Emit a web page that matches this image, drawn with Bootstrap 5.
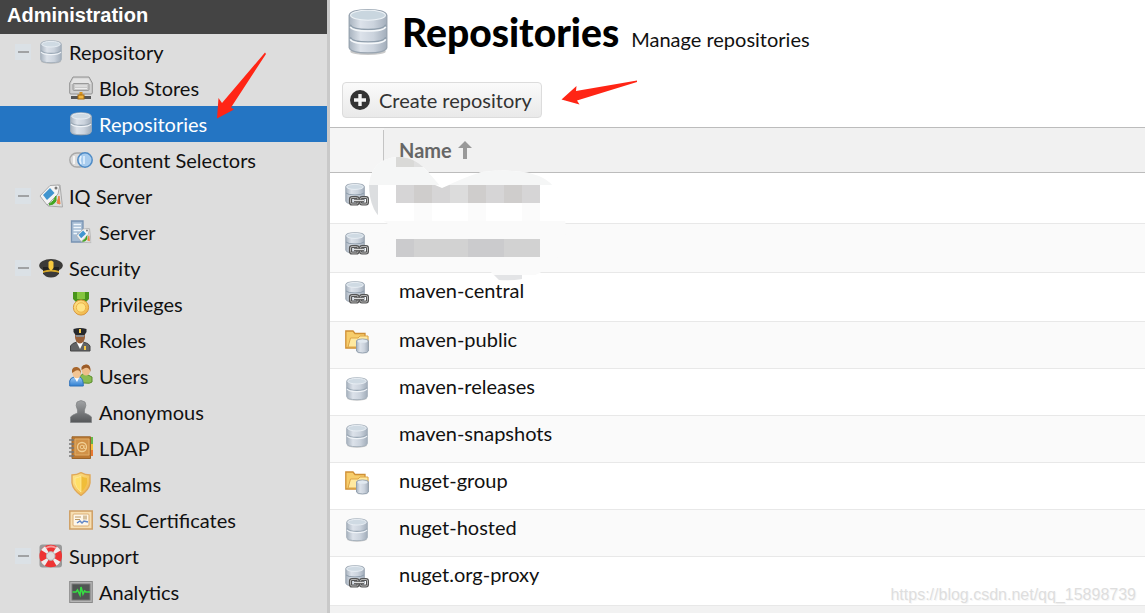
<!DOCTYPE html>
<html lang="en">
<head>
<meta charset="utf-8">
<meta name="viewport" content="width=device-width, initial-scale=1">
<title>Repositories</title>
<link href="https://cdn.jsdelivr.net/npm/bootstrap@5.3.0/dist/css/bootstrap.min.css" rel="stylesheet">
<style>
body { font-family: Lato, sans-serif; font-size: 20px; line-height: 24px; color: #111; background: #f2f2f2; }
.arial { font-family: "Liberation Sans", Arial, sans-serif; }
.side { width: 330px; background: #ddd; border-right: 3px solid #c9c9c9; }
.side-title { background: #444; color: #fff; font-size: 20px; line-height: 24px; padding: 3px 7px 7px; margin: 0; }
.tree a { height: 36px; gap: 6px; color: #111; text-decoration: none; padding-left: 39px; }
.tree a.leaf { padding-left: 69px; }
.tree a.group { padding-left: 15px; }
.tree a.current { background: #2475c3; color: #fff; }
.tree a, .create { line-height: 22px; padding-bottom: 1px; }
.fold { width: 16px; height: 16px; margin-right: 2px; background: #dbe1e6; }
.fold::before { content: ""; width: 11px; height: 2px; background: #a0a2a4; }
.ico { width: 24px; height: 24px; flex: none; display: block; }
.head { padding: 8px 18px 0; height: 82px; gap: 14px; }
.head h1 { font-size: 39px; line-height: 48px; font-weight: 900; color: #000; }
.titles { gap: 12px; }
.bar { padding: 0 12px 9px; }
.create { height: 36px; padding: 0 9px 1px 7px; gap: 9px; font-size: 20px; color: #333; border: 1px solid #dcdcdc; border-radius: 4px; background: linear-gradient(#fafafa, #e9e9e9); }
.create:hover { color: #000; }
.repos { width: 100%; table-layout: fixed; border-collapse: separate; border-spacing: 0; }
.repos th { height: 46px; padding: 0 15px; background: #f1f1f1; border: solid #bcbcbc; border-width: 1px 0; color: #666; }
.repos th:first-child { width: 54px; background: #f5f5f5; }
.tick { height: 32px; gap: 6px; border-left: 1px solid #c4c4c4; margin: 0 0 8px -16px; padding: 8px 0 0 15px; }
.repos td { height: 47px; padding: 8px 15px 0; vertical-align: top; border-bottom: 1px solid #e8e8e8; background: #fff; }
.repos td + td { padding-top: 5px; }
.repos tr.proxy td { height: 49px; }
.repos tr.proxy:first-child td { height: 51px; padding-top: 10px; }
.repos tbody tr:nth-child(even) td { background: #fafafa; }
.smudge { left: 39px; top: 29px; }
.arrow-side { left: 214px; top: 50px; }
.arrow-main { left: 560px; top: 78px; }
.watermark { right: 9px; bottom: 8px; font-size: 16px; line-height: 20px; color: #dedede; text-shadow: 1px 1px #f6f6f6; }
</style>
</head>
<body>
<svg class="position-absolute" width="0" height="0" aria-hidden="true">
  <defs>
    <linearGradient id="steel" x1="0" x2="1"><stop offset="0" stop-color="#a8b3bf"/><stop offset=".3" stop-color="#dce2ea"/><stop offset=".65" stop-color="#cbd3dd"/><stop offset="1" stop-color="#a3aebb"/></linearGradient>
    <linearGradient id="gold" x1="0" x2="1" y2="1"><stop offset="0" stop-color="#ffe98f"/><stop offset="1" stop-color="#efb040"/></linearGradient>
    <linearGradient id="blue" y2="1" x2="0"><stop offset="0" stop-color="#9fcbf5"/><stop offset="1" stop-color="#2f7fd2"/></linearGradient>
    <linearGradient id="gray" y2="1" x2="0"><stop offset="0" stop-color="#a2a4a6"/><stop offset="1" stop-color="#555759"/></linearGradient>
  </defs>
  <symbol id="db" viewBox="0 0 24 24">
    <ellipse cx="12" cy="21.500" rx="10" ry="2.200" fill="#777" opacity=".35"/>
    <path d="M1.700 4.300Q2 .8 12 .8T22.300 4.300V19.500Q22 22.700 12 22.700T1.700 19.500Z" fill="url(#steel)" stroke="#a6b1bc"/>
    <ellipse cx="12" cy="4.200" rx="9.300" ry="2.800" fill="#cfdae3" stroke="#eef3f7" stroke-width=".8"/>
    <path d="M2 10.500Q4 13.300 12 13.300T22 10.500" fill="none" stroke="#9aa8b5" stroke-width="1.200"/>
    <path d="M2 12Q4 14.600 12 14.600T22 12" fill="none" stroke="#f0f4f8" stroke-width="1.200"/>
  </symbol>
  <symbol id="db-big" viewBox="0 0 38 46">
    <ellipse cx="19" cy="42" rx="17" ry="3" fill="#777" opacity=".4"/>
    <path d="M1 7Q2 1.500 19 1.500T37 7V38Q36 43 19 43T1 38Z" fill="url(#steel)" stroke="#98a4b0" stroke-width="1.300"/>
    <ellipse cx="19" cy="7" rx="16.700" ry="4.800" fill="#c9d6df" stroke="#edf2f6"/>
    <path d="M2 16Q4 20.500 19 20.500T36 16M2 28Q4 32.500 19 32.500T36 28" fill="none" stroke="#8f9eac" stroke-width="1.300"/>
    <path d="M2 18Q4 22 19 22T36 18M2 30Q4 34 19 34T36 30" fill="none" stroke="#f5f8fa" stroke-width="1.500"/>
  </symbol>
  <symbol id="proxy" viewBox="0 0 24 24">
    <path d="M.8 3.500Q1 .8 10 .8T19.300 3.500V18Q19 21 10 21T.8 18Z" fill="url(#steel)" stroke="#9aa6b2"/>
    <ellipse cx="10" cy="3.900" rx="8.400" ry="2.500" fill="#cfdae3" stroke="#eef3f7" stroke-width=".8"/>
    <path d="M1 10Q3 12 10 12T19 10" fill="none" stroke="#8d9cab"/>
    <g fill="none"><rect x="5.500" y="14.500" width="7.500" height="6.500" rx="1.500" stroke="#555" stroke-width="3.200"/><rect x="15.500" y="14.500" width="7" height="6.500" rx="1.500" stroke="#555" stroke-width="3"/><rect x="5.500" y="14.500" width="7.500" height="6.500" rx="1.500" stroke="#b5b5b5"/><rect x="15.500" y="14.500" width="7" height="6.500" rx="1.500" stroke="#b5b5b5"/><path d="M9 17.700H19" stroke="#555" stroke-width="3"/><path d="M9 17.500H19" stroke="#ddd" stroke-width="1.300"/></g>
  </symbol>
  <symbol id="folder" viewBox="0 0 24 24">
    <path d="M.8 1H8L10 3.500H20V7H22.500V17L20 18H.8Z" fill="#f7cd6b" stroke="#cf8f35" stroke-width="1.300"/>
    <path d="M3 17L5.500 8H13L15 6H23V17Z" fill="#ffe9a0" stroke="#dda548"/>
    <path d="M11.500 10.700Q12 9 17.500 9T23.400 10.700V21Q23 23 17.500 23T11.500 21Z" fill="url(#steel)" stroke="#93a0ae"/>
    <ellipse cx="17.500" cy="11.200" rx="5" ry="1.600" fill="#e1e9f0"/>
  </symbol>
  <symbol id="blob" viewBox="0 0 24 24">
    <path d="M4 1H20L23.300 7V17Q23.300 18 22 18H2Q.7 18 .7 17V7Z" fill="#d0d0d0" stroke="#929292"/>
    <path d="M4.500 2.500H19.500L22 8H2Z" fill="#e4e4e4"/><rect x="4" y="7.500" width="16" height="7" rx="1" fill="#c9c9c9" stroke="#999"/><path d="M6 10H18M6 12.500H18" stroke="#eee"/>
    <path d="M2 21.500H22" stroke="#555" stroke-width="3"/><path d="M12 16V22" stroke="#d8921c" stroke-width="3"/><rect x="9" y="19" width="6" height="4" fill="#f3b63e" stroke="#a66c13"/>
  </symbol>
  <symbol id="selector" viewBox="0 0 24 24">
    <rect x=".8" y="5" width="17" height="14" rx="7" fill="#dadada" stroke="#a8a8a8" stroke-width="1.400"/><path d="M5 8V16" stroke="#f5f5f5" stroke-width="2"/>
    <circle cx="16" cy="12" r="7.200" fill="#a8ccee" stroke="#4e8bc6" stroke-width="1.500"/><path d="M12 8Q10 12 12 16M15 8V16" stroke="#e6f3ff" stroke-width="1.500" fill="none"/>
  </symbol>
  <symbol id="tag" viewBox="0 0 24 24">
    <path d="M14 2L21 1L23.500 23L9 22L7 16Z" fill="#ddd" stroke="#aaa"/>
    <path d="M1 12L11 1.500L19 1Q20.500 1 20.500 3L19 10L8 21Z" fill="#f4f4f4" stroke="#a9a9a9"/>
    <path d="M4 11L11 4L15.500 9L8 16Z" fill="#4095cf"/><path d="M10 20Q15 18 17 12V17Q15 21 10 21" fill="#43a623" stroke="#43a623"/><path d="M18 19L20 12L21 20Z" fill="#ed8144" stroke="#ed8144"/><circle cx="17" cy="4" r="1.500" fill="#777"/>
  </symbol>
  <symbol id="server" viewBox="0 0 24 24">
    <path d="M2.500 1H14V22H2.500Z" fill="#a6bcd4" stroke="#7893b2" stroke-width="1.300"/><path d="M4.500 4.500H12M4.500 7.500H12M4.500 10.500H12M4.500 13.500H8" stroke="#eff6fc" stroke-width="1.600"/>
    <svg x="7" y="8" width="15.500" height="15.500"><use href="#tag"/></svg>
  </symbol>
  <symbol id="cap" viewBox="0 0 24 24">
    <ellipse cx="12" cy="9.500" rx="11.800" ry="6.500" fill="#3b3a38"/><path d="M4 11H20V18Q12 22 4 18Z" fill="#222"/><path d="M4 15Q12 12 20 15V17Q12 15 4 17Z" fill="#d4a72b"/><path d="M4 17Q12 14 20 17Q18 21.500 12 21.500T4 17" fill="#3a3a3a"/><path d="M9.500 6Q12 3 14.500 6V12L12 15L9.500 12Z" fill="#f8c93f"/>
  </symbol>
  <symbol id="medal" viewBox="0 0 24 24">
    <path d="M4 0H20V7L17 10H7L4 7Z" fill="#48941a"/><path d="M8 0H16V7H8Z" fill="#85c63e"/><circle cx="12" cy="15.500" r="7.600" fill="url(#gold)" stroke="#d99537"/><circle cx="12" cy="15.500" r="4.700" fill="#ffe385" stroke="#edb54c"/>
  </symbol>
  <symbol id="officer" viewBox="0 0 24 24">
    <path d="M1.500 23V18Q3 15 8 14L11 18L14 14Q20 15 21 18V23Z" fill="#636466" stroke="#444"/><path d="M7.500 14L11 21L14.500 14Z" fill="#fff"/><ellipse cx="11" cy="9" rx="5" ry="6.500" fill="#996039"/><path d="M4.500 1Q11-1 17.500 1V4L15.500 7H6.500L4.500 4Z" fill="#26282c"/><path d="M7 7H15V9H7Z" fill="#8a8b8e"/><path d="M10 1H12V5H10ZM15 18H17V22H15Z" fill="#f7c842"/>
  </symbol>
  <symbol id="users" viewBox="0 0 24 24">
    <path d="M10 19V13L15 9L23 13V18Q21 20 16 19Z" fill="#8abb50" stroke="#5a8e2c"/><ellipse cx="17" cy="6" rx="4.300" ry="5.500" fill="#eebe8b"/><path d="M12.500 6V3Q14 0 18 .5Q22 1 21.500 8Q20 3 16 4Z" fill="#9b5b27"/>
    <path d="M.7 22V17Q1 14 5 13H11Q14.500 15 14.300 22Z" fill="url(#blue)" stroke="#3172b9"/><path d="M5 13L8 18L10.500 13Z" fill="#fff"/><ellipse cx="7.800" cy="9" rx="4.300" ry="5.300" fill="#f3c594"/><path d="M3 9V6Q4 2.500 8 3T12 10Q11 5 7 6.500Z" fill="#a8662b"/>
  </symbol>
  <symbol id="anon" viewBox="0 0 24 24">
    <path d="M8 2Q12-1 16 2Q18 5 15.500 10V13Q21 15 22.500 17V22.500H1.500V17Q3 15 8.500 13V10Q6 5 8 2Z" fill="url(#gray)" stroke="#808284" stroke-width=".7"/>
  </symbol>
  <symbol id="book" viewBox="0 0 24 24">
    <rect x="20" y="1" width="4" height="7" fill="#65b947"/><rect x="20" y="8" width="4" height="6" fill="#f5c13a"/><rect x="20" y="14" width="4" height="6" fill="#e87932"/><path d="M3 .8H21.500V22.500H3Z" fill="#bc7932" stroke="#9a642a"/><path d="M6 3H20V19H6Z" fill="#d19248" stroke="#e0ae69"/><circle cx="13" cy="11" r="4.500" fill="none" stroke="#f1cf94" stroke-width="1.300"/><circle cx="13" cy="11" r="1.800" fill="none" stroke="#f1cf94"/><path d="M15 9V12Q16 14 17.500 12" fill="none" stroke="#f1cf94"/><path d="M0 4H5M0 8H5M0 12H5M0 16H5M0 20H5" stroke="#777" stroke-width="1.600"/>
  </symbol>
  <symbol id="shield" viewBox="0 0 24 24">
    <path d="M12 .7Q16 3 21 3V11Q20 18 12 23.300Q4 18 3 11V3Q8 3 12 .7Z" fill="url(#gold)" stroke="#e0a857" stroke-width="1.400"/><path d="M12 4Q15 6 18 6V11Q17 16 12 20Z" fill="#f0bd38"/><path d="M12 4Q9 6 6 6V11Q7 16 12 20Z" fill="#ffdf67" stroke="#fff0af" stroke-width=".6"/>
  </symbol>
  <symbol id="cert" viewBox="0 0 24 24">
    <rect x=".8" y="3" width="22.400" height="18" fill="#f7dfb3" stroke="#cf9f64" stroke-width="1.500"/><rect x="4" y="6" width="16" height="12" rx="1" fill="#fdf6e9" stroke="#dcae74"/><path d="M6 9H12M6 11.500H11" stroke="#bc9a66"/><rect x="14" y="7.500" width="4" height="4" fill="#d6c09d"/><path d="M8 15L11 13L13 15L15 13L19 14" fill="none" stroke="#6286c6" stroke-width="1.500"/>
  </symbol>
  <symbol id="buoy" viewBox="0 0 24 24">
    <rect x=".5" y=".5" width="22.500" height="23" rx="3" fill="#999"/><circle cx="11.700" cy="12" r="7.800" fill="none" stroke="#ee3434" stroke-width="7"/><circle cx="11.700" cy="12" r="7.800" fill="none" stroke="#eee" stroke-width="7" stroke-dasharray="3.800 8.450" stroke-dashoffset="-4.200"/><path d="M7 4Q12 1 17 4" stroke="#f79b9b" stroke-width="2" fill="none"/><circle cx="11.700" cy="12" r="4.300" fill="#ddd" stroke="#b9b9b9"/>
  </symbol>
  <symbol id="pulse" viewBox="0 0 24 24">
    <rect x=".7" y="1.500" width="22.600" height="21" fill="#b5b5b5" stroke="#898989"/><rect x="3" y="4" width="18" height="16" fill="#505553" stroke="#777"/><path d="M3.500 12H7L8.500 10L11 15L12 7L14 14L15.500 11L17 12H21" fill="none" stroke="#36dd43" stroke-width="1.600"/>
  </symbol>
</svg>

<div class="d-flex min-vh-100 position-relative overflow-hidden">
  <aside class="side flex-shrink-0">
    <h2 class="side-title arial fw-bold">Administration</h2>
    <nav aria-label="Administration">
      <ul class="tree list-unstyled mb-0">
        <li><a href="#" class="group d-flex align-items-center"><span class="fold d-flex align-items-center justify-content-center"></span><svg class="ico"><use href="#db"/></svg>Repository</a></li>
        <li><a href="#" class="leaf d-flex align-items-center"><svg class="ico"><use href="#blob"/></svg>Blob Stores</a></li>
        <li><a href="#" class="leaf current d-flex align-items-center" aria-current="page"><svg class="ico"><use href="#db"/></svg>Repositories</a></li>
        <li><a href="#" class="leaf d-flex align-items-center"><svg class="ico"><use href="#selector"/></svg>Content Selectors</a></li>
        <li><a href="#" class="group d-flex align-items-center"><span class="fold d-flex align-items-center justify-content-center"></span><svg class="ico"><use href="#tag"/></svg>IQ Server</a></li>
        <li><a href="#" class="leaf d-flex align-items-center"><svg class="ico"><use href="#server"/></svg>Server</a></li>
        <li><a href="#" class="group d-flex align-items-center"><span class="fold d-flex align-items-center justify-content-center"></span><svg class="ico"><use href="#cap"/></svg>Security</a></li>
        <li><a href="#" class="leaf d-flex align-items-center"><svg class="ico"><use href="#medal"/></svg>Privileges</a></li>
        <li><a href="#" class="leaf d-flex align-items-center"><svg class="ico"><use href="#officer"/></svg>Roles</a></li>
        <li><a href="#" class="leaf d-flex align-items-center"><svg class="ico"><use href="#users"/></svg>Users</a></li>
        <li><a href="#" class="leaf d-flex align-items-center"><svg class="ico"><use href="#anon"/></svg>Anonymous</a></li>
        <li><a href="#" class="leaf d-flex align-items-center"><svg class="ico"><use href="#book"/></svg>LDAP</a></li>
        <li><a href="#" class="leaf d-flex align-items-center"><svg class="ico"><use href="#shield"/></svg>Realms</a></li>
        <li><a href="#" class="leaf d-flex align-items-center"><svg class="ico"><use href="#cert"/></svg>SSL Certificates</a></li>
        <li><a href="#" class="group d-flex align-items-center"><span class="fold d-flex align-items-center justify-content-center"></span><svg class="ico"><use href="#buoy"/></svg>Support</a></li>
        <li><a href="#" class="leaf d-flex align-items-center"><svg class="ico"><use href="#pulse"/></svg>Analytics</a></li>
      </ul>
    </nav>
  </aside>

  <main class="flex-grow-1">
    <div class="bg-white">
      <header class="head d-flex align-items-start">
        <svg width="40" height="48" class="flex-shrink-0" aria-hidden="true"><use href="#db-big"/></svg>
        <div class="titles d-flex align-items-baseline">
          <h1 class="mb-0">Repositories</h1>
          <span>Manage repositories</span>
        </div>
      </header>
      <div class="bar d-flex">
        <button type="button" class="create btn d-inline-flex align-items-center">
          <svg width="20" height="20" viewBox="0 0 20 20" aria-hidden="true"><circle cx="10" cy="10" r="10" fill="#333"/><path d="M10 4V16M4 10H16" stroke="#f4f4f4" stroke-width="3.400"/></svg>
          Create repository
        </button>
      </div>
    </div>
    <div class="position-relative">
      <table class="repos">
        <thead><tr><th scope="col" aria-label="Type"></th><th scope="col"><div class="tick d-flex align-items-center">Name
          <svg width="14" height="18" viewBox="0 0 14 18" aria-hidden="true"><path d="M7 0L14 7H9V18H5V7H0Z" fill="#999"/></svg></div></th></tr></thead>
        <tbody>
          <tr class="proxy"><td><svg class="ico"><use href="#proxy"/></svg></td><td></td></tr>
          <tr class="proxy"><td><svg class="ico"><use href="#proxy"/></svg></td><td></td></tr>
          <tr class="proxy"><td><svg class="ico"><use href="#proxy"/></svg></td><td>maven-central</td></tr>
          <tr><td><svg class="ico"><use href="#folder"/></svg></td><td>maven-public</td></tr>
          <tr><td><svg class="ico"><use href="#db"/></svg></td><td>maven-releases</td></tr>
          <tr><td><svg class="ico"><use href="#db"/></svg></td><td>maven-snapshots</td></tr>
          <tr><td><svg class="ico"><use href="#folder"/></svg></td><td>nuget-group</td></tr>
          <tr><td><svg class="ico"><use href="#db"/></svg></td><td>nuget-hosted</td></tr>
          <tr class="proxy"><td><svg class="ico"><use href="#proxy"/></svg></td><td>nuget.org-proxy</td></tr>
        </tbody>
      </table>
      <!-- Pixelated cover over the two private repository names -->
      <svg class="smudge position-absolute" width="200" height="126" viewBox="0 0 200 126" aria-hidden="true">
        <clipPath id="brush"><path d="M0 28Q3 3 28 1Q46 0 60 17L73 32Q98 20 113 16Q185 8 192 46Q206 92 180 110Q164 126 130 124L116 110L72 108Q52 115 32 110Q12 104 19 68Q0 57 0 28Z"/></clipPath>
        <g clip-path="url(#brush)">
          <path d="M0 0H200V66H0Z" fill="#fff"/><path d="M0 0H200V29H0Z" fill="#f5f6f6"/><path d="M27 0H45V11H27Z" fill="#d9d9d7"/><path d="M45 0H63V11H45Z" fill="#e0e0e0"/>
          <path d="M0 29H9V60H0Z" fill="#dcdee0"/><path d="M0 65H200V119H0Z" fill="#fafafa"/><path d="M45 47H63V65H45ZM99 47H117V65H99ZM153 47H171V65H153Z" fill="#fbfbfb"/><path d="M117 119H153V126H117Z" fill="#e3e4e6"/>
        </g>
        <path d="M27 29H66L73 32L80 29H171V47H27Z" fill="#d6d5d6"/><path d="M45 29H63V47H45ZM99 29H117V47H99ZM135 29H153V47H135Z" fill="#cfcdcc"/><path d="M81 29H99V47H81Z" fill="#dcdcdc"/>
        <path d="M27 83H171V101H27Z" fill="#d2d2d2"/><path d="M27 83H45V101H27ZM99 83H135V101H99Z" fill="#cbcbcd"/>
      </svg>
    </div>
  </main>

  <!-- Hand-drawn pointers laid over the screen -->
  <svg class="arrow-side position-absolute" width="54" height="70" viewBox="0 0 54 70" aria-hidden="true"><path d="M51 2.500L52 4L17 57.500L20 59.500L3 68.500L4.500 48L8 53Z" fill="#ff2515"/></svg>
  <svg class="arrow-main position-absolute" width="80" height="30" viewBox="0 0 80 30" aria-hidden="true"><path d="M77 2.500V4L17 22.500L19.500 26.500L1.500 21.500L16.500 8L16 13Z" fill="#ff2515"/></svg>
  <div class="watermark arial position-absolute">https://blog.csdn.net/qq_15898739</div>
</div>
<script src="https://cdn.jsdelivr.net/npm/bootstrap@5.3.0/dist/js/bootstrap.bundle.min.js"></script>
</body>
</html>
